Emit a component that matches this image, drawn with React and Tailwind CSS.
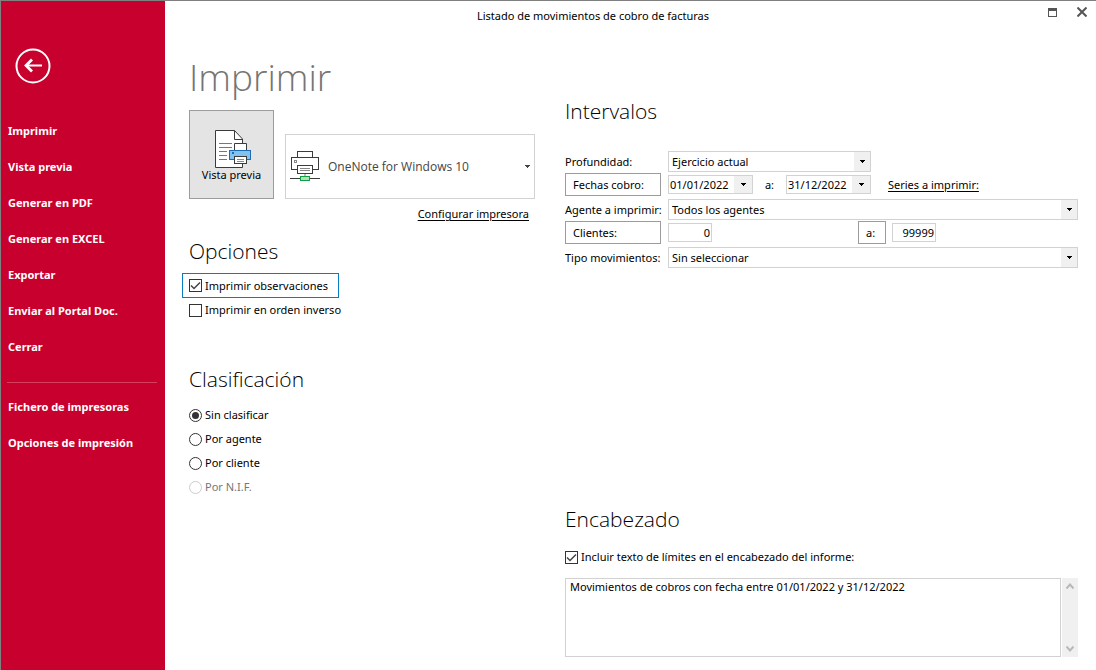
import React, { useState } from "react";

function BackIcon() {
  return (
    <svg width="36" height="36" viewBox="0 0 36 36" fill="none" stroke="white" aria-hidden="true">
      <circle cx="18" cy="18" r="16.5" strokeWidth="2" />
      <path d="M27 17.5H11" strokeWidth="2" />
      <path d="M17 11.5L11 17.5L17 23.5" strokeWidth="2.8" />
    </svg>
  );
}

function PreviewIcon() {
  return (
    <svg width="37" height="39" viewBox="0 0 37 39" aria-hidden="true">
      <path d="M0.5 0.5H19.5L27.5 9V37.5H0.5Z" fill="white" stroke="#3b3b3b" />
      <path d="M19.5 0.5V9.5H27.5" fill="none" stroke="#3b3b3b" />
      <path d="M4 13.5H17M4 17.5H17M4 21.5H12M4 25.5H12M4 29.5H12" stroke="#777" />
      <path d="M19.5 21V13.5H31.5V21" fill="white" stroke="#3b3b3b" />
      <rect x="14.5" y="20.5" width="21" height="9" fill="#83c1ee" stroke="#1c6db5" />
      <rect x="17" y="22" width="2" height="2" fill="#1c6db5" />
      <rect x="19.5" y="26.5" width="12" height="7" fill="white" stroke="#3b3b3b" />
      <path d="M22 29.5H29M22 31.5H29" stroke="#888" />
    </svg>
  );
}

function PrinterIcon() {
  return (
    <svg width="30" height="31" viewBox="0 0 30 31" aria-hidden="true">
      <rect x="1.5" y="6.5" width="27" height="12" fill="white" stroke="#3b3b3b" />
      <rect x="7.5" y="0.5" width="15" height="6" fill="white" stroke="#3b3b3b" />
      <rect x="4.5" y="9.5" width="2" height="2" fill="white" stroke="#888" />
      <rect x="7.5" y="14.5" width="15" height="8" fill="white" stroke="#3b3b3b" />
      <path d="M10 17.5H20M10 19.5H20" stroke="#888" />
      <path d="M15 23V25" stroke="#bbb" strokeWidth="2" />
      <path d="M0 27.5H30" stroke="#3b3b3b" />
      <rect x="10.5" y="25.5" width="9" height="4" fill="#b2dfb5" stroke="#0f9d45" />
    </svg>
  );
}

function Caret() {
  return (
    <svg width="5" height="3" viewBox="0 0 5 3" fill="currentColor" shapeRendering="crispEdges" aria-hidden="true">
      <path d="M0 0H5V1H4V2H3V3H2V2H1V1H0Z" />
    </svg>
  );
}

function Chevron({ down }) {
  return (
    <svg width="8" height="6" viewBox="0 0 8 6" fill="none" stroke="#b8b8b8" strokeWidth="2" aria-hidden="true">
      <path d={down ? "M0.5 0.5L4 4.5L7.5 0.5" : "M0.5 5.5L4 1.5L7.5 5.5"} />
    </svg>
  );
}

function Sidebar() {
  const actions = ["Imprimir", "Vista previa", "Generar en PDF", "Generar en EXCEL", "Exportar", "Enviar al Portal Doc.", "Cerrar"];
  const settings = ["Fichero de impresoras", "Opciones de impresión"];
  const item = "block h-9 w-full px-[7px] text-left font-bold";
  return (
    <nav className="w-[165px] shrink-0 border-l border-[#808080] bg-[#c8002d] pt-[47px] text-white">
      <button type="button" aria-label="Volver" className="mb-[29px] ml-[14px] block">
        <BackIcon />
      </button>
      {actions.map((t) => (
        <button key={t} type="button" className={item}>{t}</button>
      ))}
      <hr className="mt-[17px] mr-2 mb-[6px] ml-[6px] border-[#d6405f]" />
      {settings.map((t) => (
        <button key={t} type="button" className={item}>{t}</button>
      ))}
    </nav>
  );
}

function Heading({ children }) {
  return <h2 className="font-['Open_Sans',sans-serif] text-[21px] leading-8 font-light text-black">{children}</h2>;
}

function Check({ label, defaultChecked, className = "" }) {
  return (
    <label className={`flex h-6 items-center gap-[3px] ${className}`}>
      <span className="grid place-items-center">
        <input type="checkbox" defaultChecked={defaultChecked} className="peer col-start-1 row-start-1 size-[13px] appearance-none border border-[#333] bg-white outline-none" />
        <svg className="pointer-events-none invisible col-start-1 row-start-1 peer-checked:visible" width="11" height="9" viewBox="0 0 11 9" fill="none" stroke="#444" strokeWidth="1.5" aria-hidden="true">
          <path d="M1 4.5L4 7.5L10 1.5" />
        </svg>
      </span>
      {label}
    </label>
  );
}

function Radio({ label, disabled, defaultChecked }) {
  return (
    <label className={`flex h-6 items-center gap-[3px] ${disabled ? "text-[#777]" : ""}`}>
      <span className="grid place-items-center">
        <input type="radio" name="clasificacion" disabled={disabled} defaultChecked={defaultChecked} className="peer col-start-1 row-start-1 size-[13px] appearance-none rounded-full border border-[#333] bg-white disabled:border-[#ccc]" />
        <span className="pointer-events-none invisible col-start-1 row-start-1 size-[7px] rounded-full bg-[#333] peer-checked:visible" />
      </span>
      {label}
    </label>
  );
}

function Combo({ id, value, className = "" }) {
  return (
    <div className={`grid h-[21px] border border-[#d2d2d2] bg-white ${className}`}>
      <select id={id} className="col-start-1 row-start-1 h-[19px] w-full appearance-none px-[3px] outline-none">
        <option>{value}</option>
      </select>
      <span className="pointer-events-none col-start-1 row-start-1 flex w-4 items-center justify-center justify-self-end bg-[#f0f0f0]">
        <Caret />
      </span>
    </div>
  );
}

function DateBox({ label, value }) {
  return (
    <div className="flex h-[19px] w-[85px] border border-[#d2d2d2] bg-white">
      <input aria-label={label} defaultValue={value} className="w-0 flex-1 pl-px outline-none" />
      <button type="button" aria-label="Abrir calendario" className="flex w-[18px] items-center justify-center bg-[#f0f0f0]">
        <Caret />
      </button>
    </div>
  );
}

function NumberBox({ label, value }) {
  return <input aria-label={label} defaultValue={value} className="h-[19px] w-11 border border-[#d2d2d2] bg-white pr-px text-right outline-none" />;
}

const rowGrid = "grid h-[23px] grid-cols-[103px_1fr] items-center";
const frameButton = "h-[23px] border border-[#9c9c9c] bg-white px-[7px] text-left";

export default function App() {
  const [texto, setTexto] = useState("Movimientos de cobros con fecha entre 01/01/2022 y 31/12/2022");
  return (
    <div className="flex min-h-screen border-t border-[#808080] bg-white font-['Noto_Sans',sans-serif] text-[11px] leading-4 text-black">
      <Sidebar />
      <div className="flex min-w-0 flex-1 flex-col">
        <header className="flex h-[30px] items-center">
          <h1 className="flex-1 text-center">Listado de movimientos de cobro de facturas</h1>
          <div className="flex w-[75px] items-center gap-[20px] self-start pt-[6px] pl-[27px]">
            <button type="button" aria-label="Maximizar">
              <svg width="9" height="9" viewBox="0 0 9 9" shapeRendering="crispEdges" aria-hidden="true">
                <path d="M0 0H9V9H0ZM1 3V8H8V3Z" fill="#555" fillRule="evenodd" />
              </svg>
            </button>
            <button type="button" aria-label="Cerrar ventana">
              <svg width="10" height="10" viewBox="0 0 10 10" stroke="#555" strokeWidth="2" aria-hidden="true">
                <path d="M0.5 0.5L9.5 9.5M9.5 0.5L0.5 9.5" />
              </svg>
            </button>
          </div>
        </header>

        <main className="flex flex-1 gap-[30px] pr-[18px] pl-6">
          <div className="w-[346px] shrink-0 pt-[22px]">
            <h2 className="font-['Open_Sans',sans-serif] text-[37px] leading-[48px] font-light text-[#757575]">Imprimir</h2>
            <div className="mt-[9px] flex items-end gap-[11px]">
              <button type="button" className="flex h-[89px] w-[85px] flex-col items-center border border-[#9c9c9c] bg-[#e4e4e4] pt-[19px]">
                <span className="pl-1"><PreviewIcon /></span>
                <span className="-mt-[2px]">Vista previa</span>
              </button>
              <button type="button" aria-haspopup="listbox" className="flex h-[65px] flex-1 items-center border border-[#d2d2d2] bg-white px-1 text-left text-xs text-[#444]">
                <PrinterIcon />
                <span className="ml-2 flex-1 font-['Open_Sans',sans-serif]">OneNote for Windows 10</span>
                <Caret />
              </button>
            </div>
            <div className="mt-[7px] pr-[6px] text-right">
              <a href="#configurar" className="underline underline-offset-2">Configurar impresora</a>
            </div>

            <section className="mt-[13px]">
              <Heading>Opciones</Heading>
              <div className="mt-[6px] -ml-[7px] flex flex-col items-start">
                <Check label="Imprimir observaciones" defaultChecked className="h-[25px] w-[157px] border border-[#0a7cc4] pl-[6px]" />
                <Check label="Imprimir en orden inverso" className="pl-[7px]" />
              </div>
            </section>

            <section className="mt-[41px]">
              <Heading>Clasificación</Heading>
              <div className="mt-2">
                <Radio label="Sin clasificar" defaultChecked />
                <Radio label="Por agente" />
                <Radio label="Por cliente" />
                <Radio label="Por N.I.F." disabled />
              </div>
            </section>
          </div>

          <div className="flex min-w-0 flex-1 flex-col justify-between pt-16 pb-[13px]">
            <section>
              <Heading>Intervalos</Heading>
              <div className="mt-[23px] flex flex-col gap-[2px]">
                <div>
                  <div className={rowGrid}>
                    <label htmlFor="profundidad">Profundidad:</label>
                    <Combo id="profundidad" value="Ejercicio actual" className="w-[203px]" />
                  </div>
                  <div className={rowGrid}>
                    <button type="button" className={`w-24 ${frameButton}`}>Fechas cobro:</button>
                    <div className="flex items-center">
                      <DateBox label="Fecha desde" value="01/01/2022" />
                      <span className="w-[33px] text-center">a:</span>
                      <DateBox label="Fecha hasta" value="31/12/2022" />
                      <a href="#series" className="ml-[17px] underline underline-offset-2">Series a imprimir:</a>
                    </div>
                  </div>
                </div>
                <div>
                  <div className={rowGrid}>
                    <label htmlFor="agente" className="whitespace-nowrap">Agente a imprimir:</label>
                    <Combo id="agente" value="Todos los agentes" />
                  </div>
                  <div className={rowGrid}>
                    <button type="button" className={`w-24 ${frameButton}`}>Clientes:</button>
                    <div className="flex items-center gap-[6px]">
                      <div className="w-[184px]">
                        <NumberBox label="Cliente desde" value="0" />
                      </div>
                      <button type="button" className={`w-7 ${frameButton}`}>a:</button>
                      <NumberBox label="Cliente hasta" value="99999" />
                    </div>
                  </div>
                </div>
                <div className={rowGrid}>
                  <label htmlFor="tipo" className="whitespace-nowrap">Tipo movimientos:</label>
                  <Combo id="tipo" value="Sin seleccionar" />
                </div>
              </div>
            </section>

            <section>
              <Heading>Encabezado</Heading>
              <Check label="Incluir texto de límites en el encabezado del informe:" defaultChecked className="mt-[10px]" />
              <div className="mt-[9px] flex h-[79px] gap-px">
                <textarea aria-label="Texto del encabezado" value={texto} onChange={(e) => setTexto(e.target.value)} className="min-w-0 flex-1 resize-none border border-[#d2d2d2] px-1 outline-none" />
                <div className="flex w-4 flex-col items-center justify-between bg-[#f0f0f0] py-[5px]">
                  <button type="button" aria-label="Subir"><Chevron /></button>
                  <button type="button" aria-label="Bajar"><Chevron down /></button>
                </div>
              </div>
            </section>
          </div>
        </main>
      </div>
    </div>
  );
}
